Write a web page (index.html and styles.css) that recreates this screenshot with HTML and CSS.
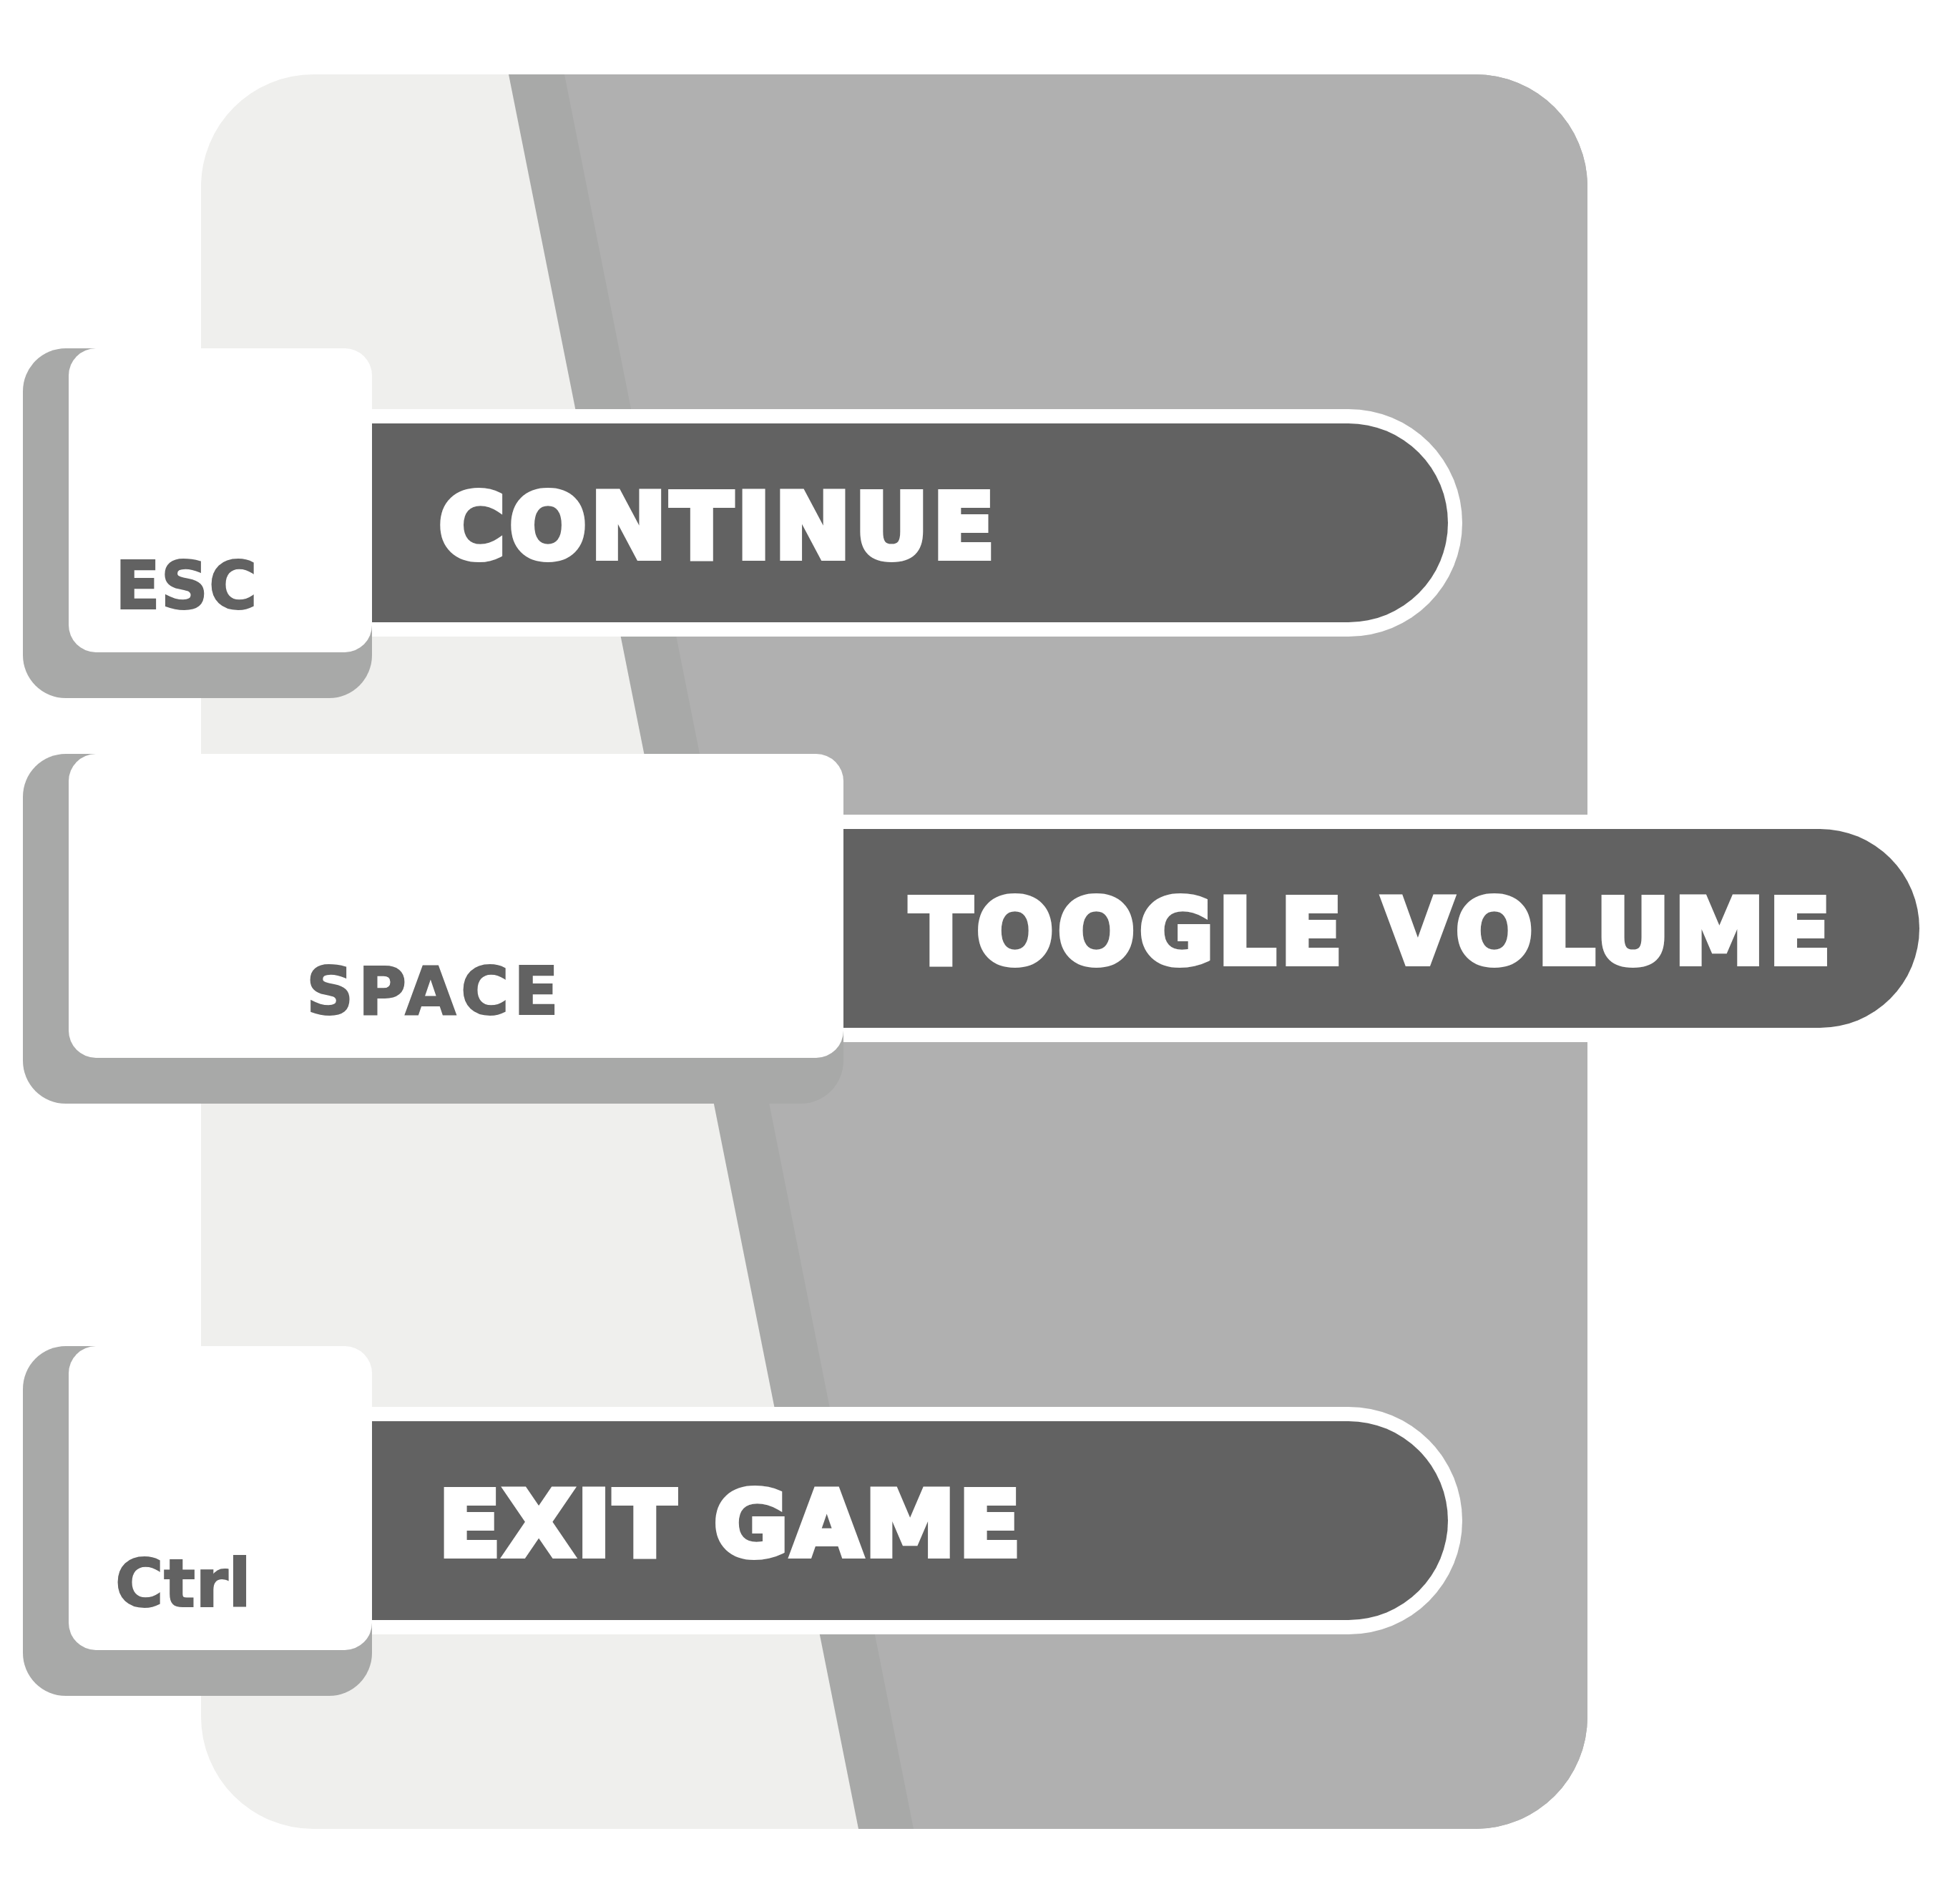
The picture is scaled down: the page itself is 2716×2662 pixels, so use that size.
FILE: index.html
```html
<!DOCTYPE html>
<html lang="en">
<head>
<meta charset="utf-8">
<title>Game menu controls</title>
<link rel="stylesheet" href="styles.css">
</head>
<body>
<div class="stage">
  <div class="panel"></div>
  <div class="menu">
    <div class="row row-esc">
      <div class="key"><div class="cap cap-small"><span class="label label-esc">ESC</span></div></div>
      <div class="bar"><span class="bar-text">CONTINUE</span></div>
    </div>
    <div class="row row-space">
      <div class="key"><div class="cap cap-wide"><span class="label label-space">SPACE</span></div></div>
      <div class="bar"><span class="bar-text bar-text-wide">TOOGLE VOLUME</span></div>
    </div>
    <div class="row row-ctrl">
      <div class="key"><div class="cap cap-small"><span class="label label-ctrl">Ctrl</span></div></div>
      <div class="bar"><span class="bar-text bar-text-tight">EXIT GAME</span></div>
    </div>
  </div>
</div>
</body>
</html>
```
FILE: styles.css
```css
html, body {
  margin: 0;
  padding: 0;
  background: #ffffff;
}

.stage {
  display: grid;
  width: 2716px;
  height: 2662px;
  font-family: "DejaVu Sans", "Liberation Sans", sans-serif;
  font-weight: 700;
}

.panel {
  grid-area: 1 / 1;
  position: relative;
  margin-left: 281px;
  margin-top: 104px;
  width: 1938px;
  height: 2453px;
  border-radius: 157px;
  background: #efefed;
  overflow: hidden;
}

.panel::before,
.panel::after {
  content: "";
  position: absolute;
  inset: 0;
}

.panel::before {
  background: #a8a9a8;
  clip-path: polygon(430px 0, 100% 0, 100% 100%, 919px 100%);
}

.panel::after {
  background: #b0b0b0;
  clip-path: polygon(508px 0, 100% 0, 100% 100%, 996px 100%);
}

.menu {
  grid-area: 1 / 1;
  display: flex;
  flex-direction: column;
  padding-top: 487px;
  padding-left: 32px;
  position: relative;
}

.row {
  display: flex;
  align-items: flex-start;
}

.row-space {
  margin-top: 78px;
}

.row-ctrl {
  margin-top: 339px;
}

.key {
  background: #a8a9a8;
  border-radius: 60px;
  padding-left: 64px;
  padding-bottom: 64px;
}

.cap {
  box-sizing: border-box;
  height: 425px;
  background: #ffffff;
  border-radius: 38px;
  padding-top: 287px;
  padding-left: 65px;
}

.cap-small {
  width: 424px;
}

.cap-wide {
  width: 1083px;
  padding-left: 332px;
}

.label {
  display: block;
  font-size: 92px;
  line-height: 1;
  letter-spacing: 3.5px;
  color: #626262;
  -webkit-text-stroke: 2px #626262;
  white-space: nowrap;
}

.label-esc {
  letter-spacing: 1px;
}

.label-space {
  letter-spacing: 6.5px;
}

.label-ctrl {
  letter-spacing: 0.5px;
}

.bar {
  box-sizing: border-box;
  margin-top: 85px;
  width: 1524px;
  height: 318px;
  background: #626262;
  border: 20px solid #ffffff;
  border-left: 0;
  border-radius: 0 159px 159px 0;
  padding-top: 81px;
  padding-left: 93px;
}

.bar-text {
  display: block;
  font-size: 127px;
  line-height: 1;
  letter-spacing: 5.7px;
  color: #ffffff;
  -webkit-text-stroke: 8px #ffffff;
  white-space: nowrap;
}

.bar-text-wide {
  letter-spacing: 6px;
}

.bar-text-tight {
  letter-spacing: 4.4px;
}
```
